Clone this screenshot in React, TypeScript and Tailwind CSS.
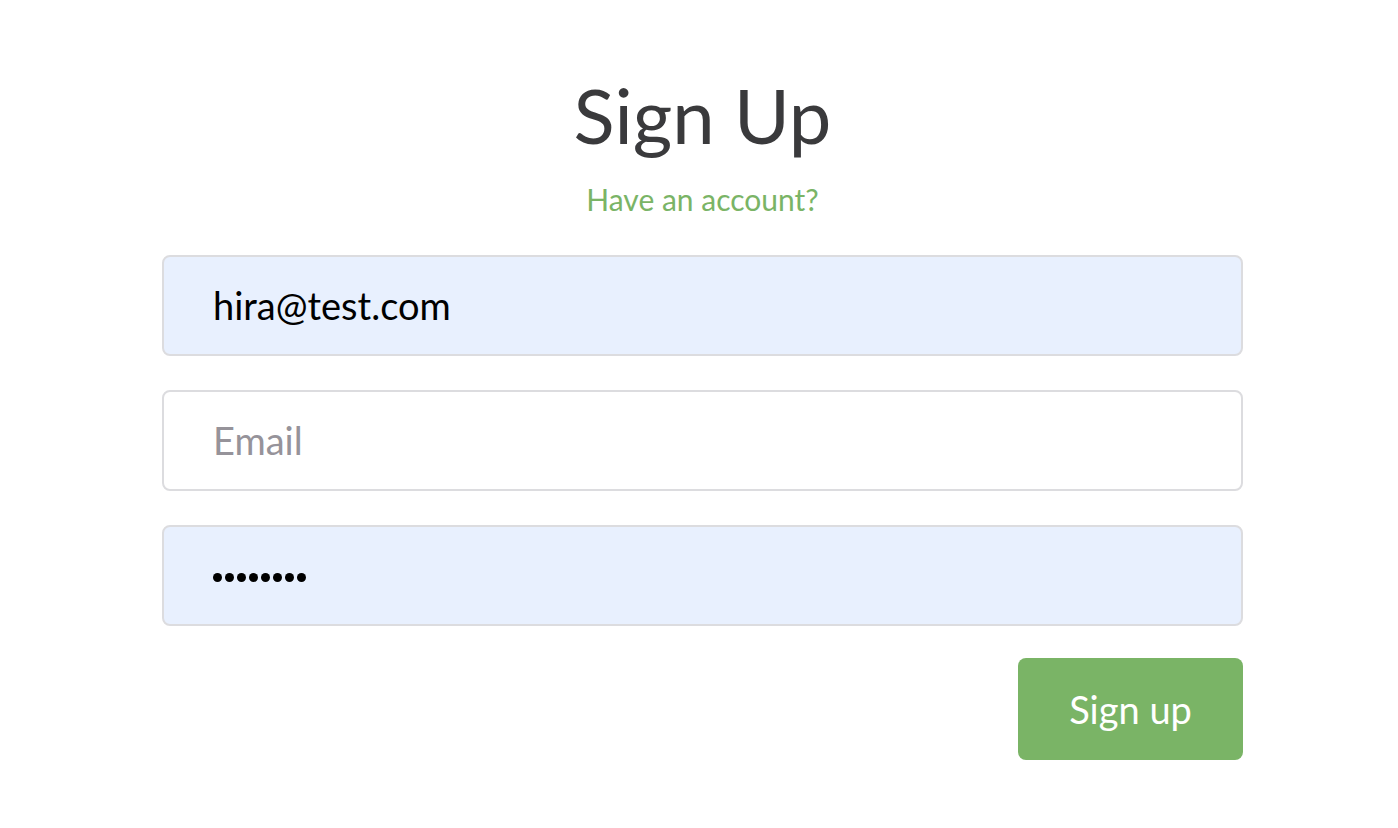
import React from "react";

function Dots() {
  return (
    <div className="flex gap-[3px]">
      {Array.from({ length: 8 }).map((_, i) => (
        <span key={i} className="w-[9px] h-[9px] rounded-full bg-black" />
      ))}
    </div>
  );
}

export default function App() {
  const font = { fontFamily: "Lato, 'Noto Sans', sans-serif" };
  return (
    <div className="w-[1398px] h-[828px] bg-white" style={font}>
      <div className="w-[1081px] ml-[162px] pt-[65px] flex flex-col">
        <h1 className="text-center text-[76px] leading-[100px] text-[#3a3a3c] font-normal">Sign Up</h1>
        <p className="text-center text-[30px] leading-[36px] text-[#7ab466] mt-[16px]">Have an account?</p>
        <div className="mt-[38px] flex flex-col gap-[34px]">
          <div className="h-[101px] rounded-[8px] border-2 border-[#dcdcdf] bg-[#e8f0fe] flex items-center pl-[49px] text-[38px] text-black">
            hira@test.com
          </div>
          <div className="h-[101px] rounded-[8px] border-2 border-[#dcdcdf] bg-white flex items-center pl-[49px] text-[38px] text-[#96939a]">
            Email
          </div>
          <div className="h-[101px] rounded-[8px] border-2 border-[#dcdcdf] bg-[#e8f0fe] flex items-center pl-[49px] pt-[4px]">
            <Dots />
          </div>
        </div>
        <div className="flex justify-end mt-[32px]">
          <button className="w-[225px] h-[102px] rounded-[8px] bg-[#7ab466] text-white text-[38px]">Sign up</button>
        </div>
      </div>
    </div>
  );
}
